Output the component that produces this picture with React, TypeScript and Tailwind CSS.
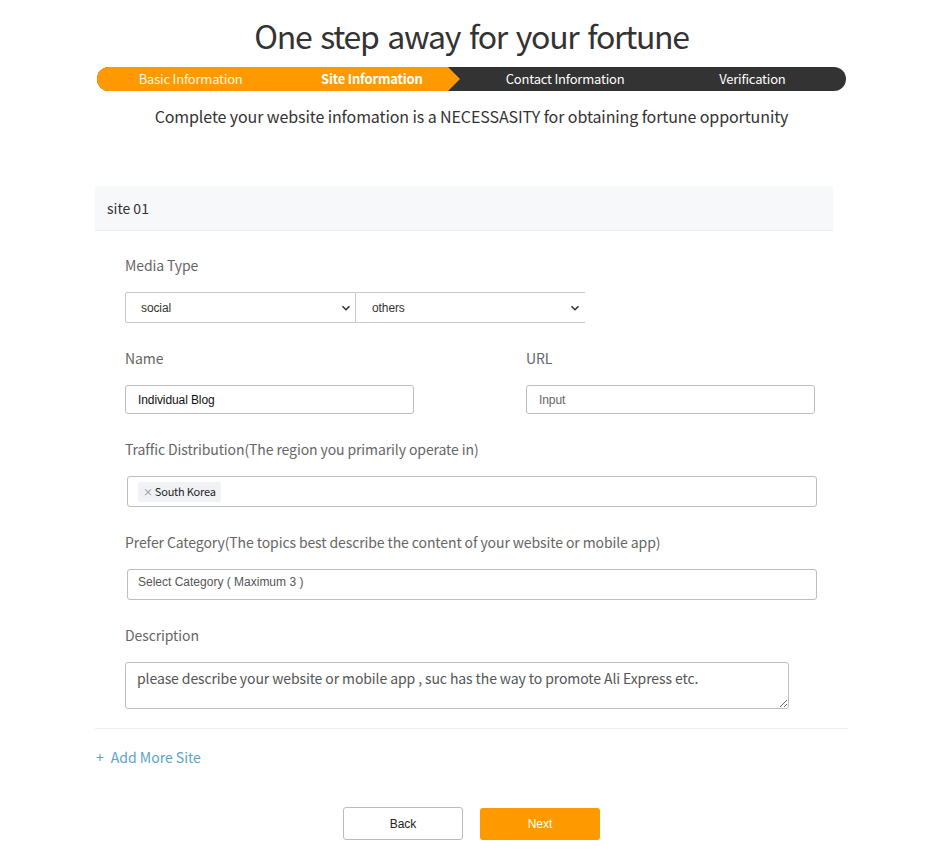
import React from "react";

const F = "font-['Noto_Sans_CJK_KR','Noto_Sans',sans-serif]";
const A = "font-['Liberation_Sans',Arial,sans-serif]";

function Chevron() {
  return (
    <svg width="10" height="10" viewBox="0 0 10 10" className="pointer-events-none absolute top-1/2 -translate-y-1/2 right-[5px]">
      <path d="M1.5 3.2 L5 6.7 L8.5 3.2" fill="none" stroke="#333" strokeWidth="1.6" />
    </svg>
  );
}

export default function App() {
  return (
    <div className={`min-h-[854px] bg-white ${F} text-[#333]`}>
      <div className="w-[753px] mx-auto pb-4">
        <h1 className="mt-[15px] text-center text-[32px] leading-[40px] text-[#333] tracking-[-1.3px] [word-spacing:3px]">
          One step away for your fortune
        </h1>

        <div className="mt-[12px] mx-[2px] relative h-[24px] rounded-full overflow-hidden bg-[#333]">
          <div className="absolute left-0 top-0 h-full w-[363px] bg-[#ff9900] [clip-path:polygon(0_0,351px_0,100%_50%,351px_100%,0_100%)]" />
          <div className="relative grid grid-cols-4 h-full text-[13px] leading-[24px] text-white text-center tracking-[-0.2px]">
            <span className="text-white/90">Basic Information</span>
            <span className="font-bold pr-[12px]">Site Information</span>
            <span>Contact Information</span>
            <span>Verification</span>
          </div>
        </div>

        <p className="mt-[13px] text-center text-[16px] leading-[24px] text-[#333] tracking-[-0.1px]">
          Complete your website infomation is a NECESSASITY for obtaining fortune opportunity
        </p>

        <div className="mt-[58px] mr-[15px] h-[45px] bg-[#f7f8fa] border-b border-[#eeeeee] pl-[12px] flex items-center text-[14px] text-[#333]">
          site 01
        </div>

        <div className="pl-[30px] text-[14px] tracking-[-0.1px]">
          <div className="mt-[24px] leading-[20px] text-[#666]">Media Type</div>
          <div className="mt-[17px] flex">
            <div className="relative w-[231px] h-[31px]">
              <select className={`${A} appearance-none w-full h-full border border-[#c8c8c8] rounded-l-[2px] pl-[15px] text-[12px] text-[#333] bg-white outline-none`} defaultValue="social">
                <option value="social">social</option>
              </select>
              <Chevron />
            </div>
            <div className="relative w-[229px] h-[31px]">
              <select className={`${A} appearance-none w-full h-full border-y border-r-0 border-l-0 border-[#c8c8c8] pl-[16px] text-[12px] text-[#333] bg-white outline-none`} defaultValue="others">
                <option value="others">others</option>
              </select>
              <Chevron />
            </div>
          </div>

          <div className="mt-[25px] flex">
            <div className="w-[401px]">
              <div className="leading-[20px] text-[#666]">Name</div>
              <input
                className={`${A} mt-[17px] w-[289px] h-[29px] border border-[#bdbdbd] rounded-[3px] px-[12px] text-[12px] text-[#111] outline-none`}
                defaultValue="Individual Blog"
              />
            </div>
            <div>
              <div className="leading-[20px] text-[#666]">URL</div>
              <input
                className={`${A} mt-[17px] w-[289px] h-[29px] border border-[#bdbdbd] rounded-[3px] px-[12px] text-[12px] outline-none placeholder:text-[#666]`}
                placeholder="Input"
              />
            </div>
          </div>

          <div className="mt-[25px] leading-[20px] text-[#666]">Traffic Distribution(The region you primarily operate in)</div>
          <div className="mt-[17px] ml-[2px] w-[690px] h-[31px] border border-[#bdbdbd] rounded-[3px] flex items-center pl-[10px]">
            <span className="h-[20px] px-[5px] bg-[#f1f2f6] rounded-[3px] flex items-center gap-[2px] text-[11px] tracking-[-0.2px] text-[#222]">
              <span className="text-[10px] text-[#888]">×</span>South Korea
            </span>
          </div>

          <div className="mt-[25px] leading-[20px] text-[#666]">Prefer Category(The topics best describe the content of your website or mobile app)</div>
          <div className={`${A} mt-[17px] ml-[2px] w-[690px] h-[31px] border border-[#bdbdbd] rounded-[3px] pl-[10px] pt-[5px] text-[12px] leading-[14px] text-[#555] tracking-normal`}>
            Select Category ( Maximum 3 )
          </div>

          <div className="mt-[25px] leading-[20px] text-[#666]">Description</div>
          <textarea
            className={`${F} block mt-[17px] w-[664px] h-[47px] border border-[#bdbdbd] rounded-[3px] px-[11px] pt-[5px] text-[14px] leading-[20px] outline-none placeholder:text-[#555]`}
            placeholder="please describe your website or mobile app , suc has the way to promote Ali Express etc."
          />
        </div>

        <div className="mt-[19px] border-t border-[#eeeeee]" />

        <div className="mt-[18px] pl-[1px] leading-[20px] text-[14px] text-[#5ba2c9] flex">
          <span>+</span>
          <span className="ml-[7px]">Add More Site</span>
        </div>

        <div className={`${A} mt-[40px] flex justify-center gap-[17px] text-[12px]`}>
          <button className="w-[120px] h-[33px] border border-[#bbbbbb] rounded-[3px] bg-white text-[#222]">Back</button>
          <button className="w-[120px] h-[32px] mt-[1px] rounded-[3px] bg-[#ff9900] text-white">Next</button>
        </div>
      </div>
    </div>
  );
}
